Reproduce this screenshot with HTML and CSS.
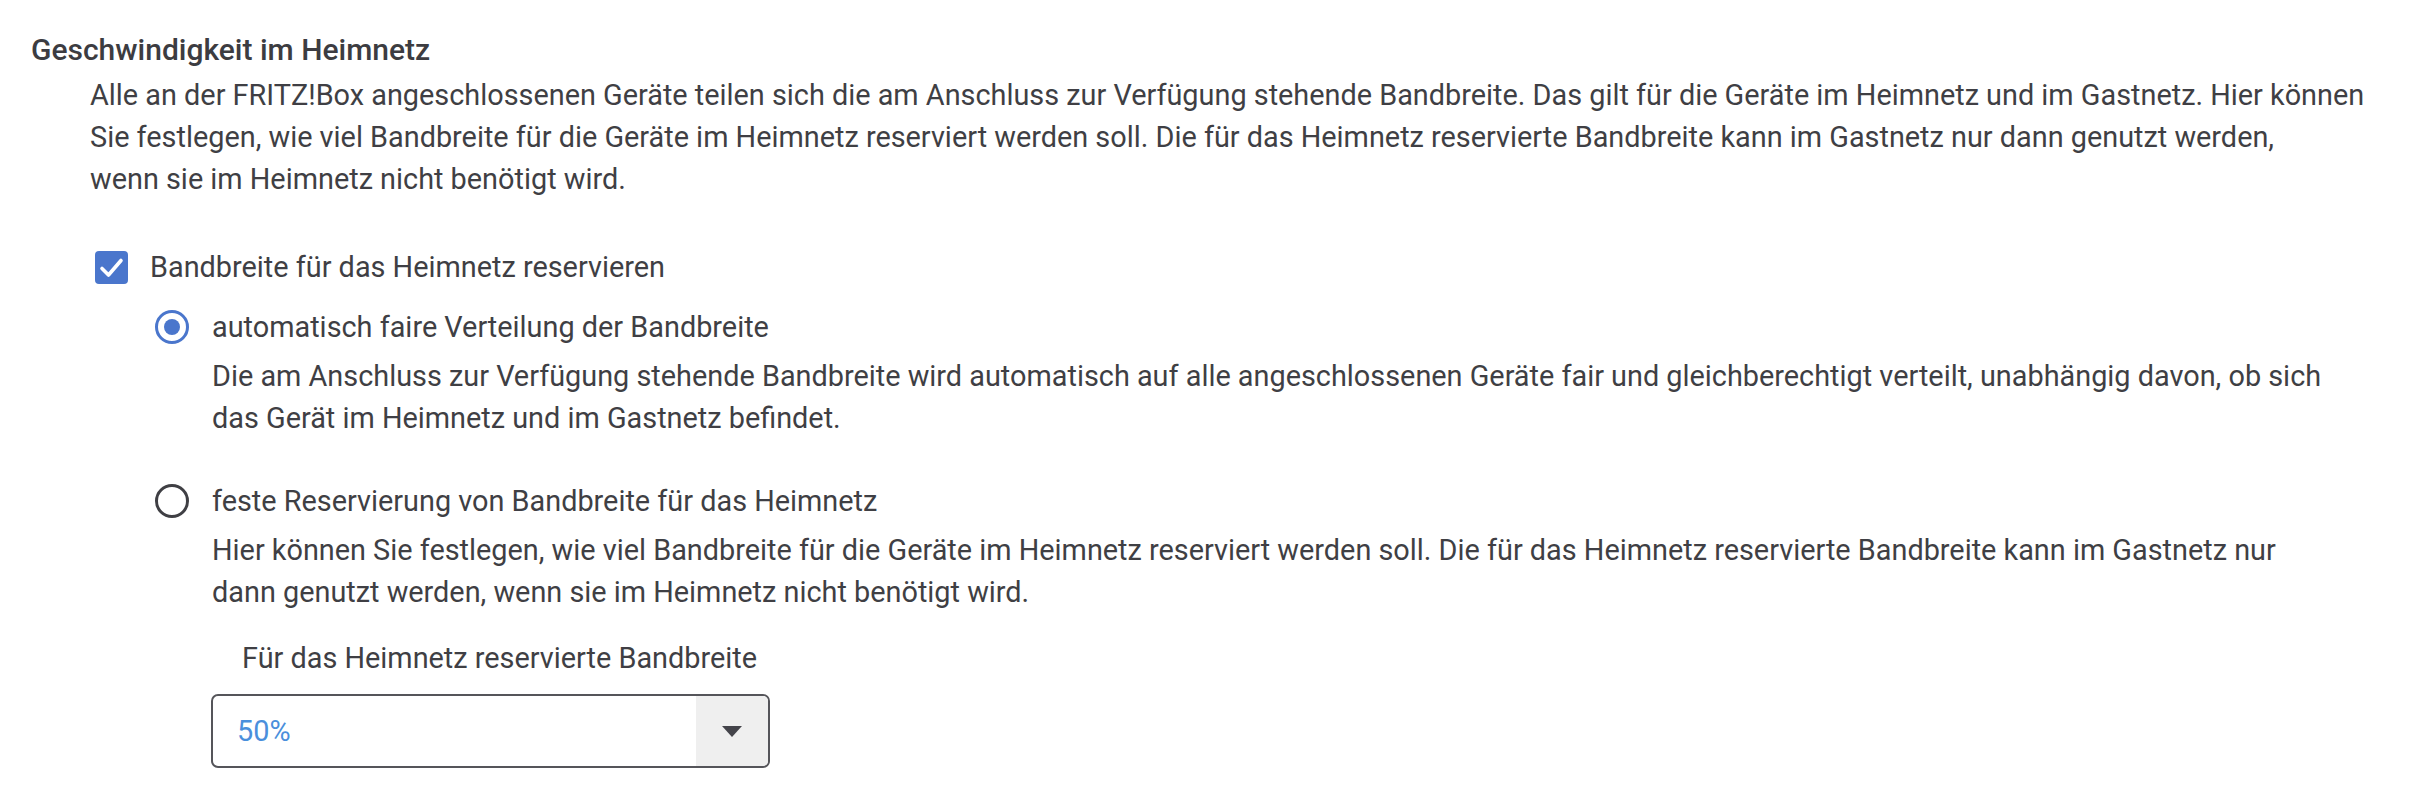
FILE: index.html
```html
<!DOCTYPE html>
<html>
	<head>
		<meta charset="UTF-8">
		<title>Geschwindigkeit im Heimnetz</title>
		<link rel="stylesheet" href="styles.css">
	</head>
	<body>
		<div id="wrap">
			<h2 class="title">Geschwindigkeit im Heimnetz</h2>
			<div class="cont">
				<p class="intro">Alle an der FRITZ!Box angeschlossenen Geräte teilen sich die am Anschluss zur Verfügung stehende Bandbreite. Das gilt für die Geräte im Heimnetz und im Gastnetz. Hier können Sie festlegen, wie viel Bandbreite für die Geräte im Heimnetz reserviert werden soll. Die für das Heimnetz reservierte Bandbreite kann im Gastnetz nur dann genutzt werden,<br>wenn sie im Heimnetz nicht benötigt wird.</p>

				<label class="check">
					<span class="checkbox">
						<svg viewBox="0 0 33 33" width="33" height="33"><path d="M7 17.5l6.5 6.5 12.5-14.5" fill="none" stroke="#fff" stroke-width="3.6" stroke-linecap="round" stroke-linejoin="round"/></svg>
					</span>
					<span>Bandbreite für das Heimnetz reservieren</span>
				</label>

				<div class="options">
					<div class="option">
						<label class="radio">
							<span class="radiobox on"></span>
							<span>automatisch faire Verteilung der Bandbreite</span>
						</label>
						<p class="desc">Die am Anschluss zur Verfügung stehende Bandbreite wird automatisch auf alle angeschlossenen Geräte fair und gleichberechtigt verteilt, unabhängig davon, ob sich<br>das Gerät im Heimnetz und im Gastnetz befindet.</p>
					</div>

					<div class="option">
						<label class="radio">
							<span class="radiobox"></span>
							<span>feste Reservierung von Bandbreite für das Heimnetz</span>
						</label>
						<p class="desc">Hier können Sie festlegen, wie viel Bandbreite für die Geräte im Heimnetz reserviert werden soll. Die für das Heimnetz reservierte Bandbreite kann im Gastnetz nur<br>dann genutzt werden, wenn sie im Heimnetz nicht benötigt wird.</p>

						<div class="field">
							<div class="field-label">Für das Heimnetz reservierte Bandbreite</div>
							<div class="select">
								<span class="select-value">50%</span>
								<span class="select-arrow"></span>
							</div>
						</div>
					</div>
				</div>
			</div>
		</div>
	</body>
</html>
```

FILE: styles.css
```css
body{
	margin: 0;
	background: #fff;
	color: #3f3f44;
	font-family: Roboto, "Liberation Sans", sans-serif;
	font-size: 28.85px;
	line-height: 42px;
}
p{
	margin: 0;
}
#wrap{
	padding: 30px 36px 0 31px;
}
.title{
	margin: 0;
	font-size: 30px;
	line-height: 40px;
	font-weight: 500;
	color: #3c3c41;
}
.cont{
	padding-left: 59px;
	margin-top: 4px;
}
.intro{
	margin-bottom: 46px;
}
.check,
.radio{
	display: flex;
	align-items: center;
	gap: 22px;
}
.check{
	padding-left: 5px;
}
.checkbox{
	width: 33px;
	height: 33px;
	border-radius: 4px;
	background-color: #4a76cc;
	display: flex;
	align-items: center;
	justify-content: center;
}
.options{
	padding-left: 65px;
	margin-top: 18px;
}
.option{
	margin-bottom: 41px;
}
.radio{
	gap: 23px;
}
.radiobox{
	box-sizing: border-box;
	width: 34px;
	height: 34px;
	border: 3px solid #3f3f44;
	border-radius: 50%;
	display: flex;
	align-items: center;
	justify-content: center;
}
.radiobox.on{
	border-color: #4a76cc;
}
.radiobox.on:after{
	content: "";
	width: 16px;
	height: 16px;
	border-radius: 50%;
	background-color: #4a76cc;
}
.desc{
	padding-left: 57px;
	margin-top: 7px;
}
.field{
	padding-left: 56px;
	margin-top: 24px;
}
.field-label{
	padding-left: 31px;
	margin-bottom: 15px;
}
.select{
	box-sizing: border-box;
	width: 559px;
	height: 74px;
	border: 2px solid #55555a;
	border-radius: 7px;
	display: flex;
	align-items: center;
	overflow: hidden;
}
.select-value{
	flex: 1;
	padding-left: 24px;
	color: #4a8fdc;
}
.select-arrow{
	width: 72px;
	height: 100%;
	background-color: #efefef;
	display: flex;
	align-items: center;
	justify-content: center;
}
.select-arrow:after{
	content: "";
	border-left: 10px solid transparent;
	border-right: 10px solid transparent;
	border-top: 11px solid #44444a;
}
```
